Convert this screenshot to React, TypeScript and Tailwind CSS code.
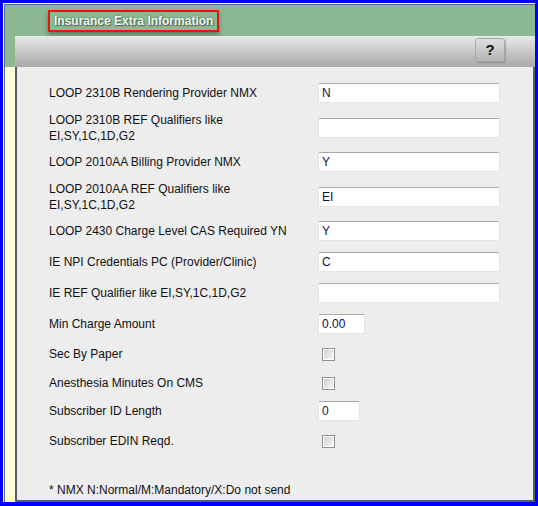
import React from 'react';

type Row =
  | { kind: 'text'; label: string[]; value: string; width: string; mt: string; h: string }
  | { kind: 'check'; label: string[]; mt: string; h: string };

const rows: Row[] = [
  { kind: 'text', label: ['LOOP 2310B Rendering Provider NMX'], value: 'N', width: 'w-[182px]', mt: 'mt-[16px]', h: 'h-[20px]' },
  { kind: 'text', label: ['LOOP 2310B REF Qualifiers like', 'EI,SY,1C,1D,G2'], value: '', width: 'w-[182px]', mt: 'mt-[9px]', h: 'h-[32px]' },
  { kind: 'text', label: ['LOOP 2010AA Billing Provider NMX'], value: 'Y', width: 'w-[182px]', mt: 'mt-[8px]', h: 'h-[20px]' },
  { kind: 'text', label: ['LOOP 2010AA REF Qualifiers like', 'EI,SY,1C,1D,G2'], value: 'EI', width: 'w-[182px]', mt: 'mt-[9px]', h: 'h-[32px]' },
  { kind: 'text', label: ['LOOP 2430 Charge Level CAS Required YN'], value: 'Y', width: 'w-[182px]', mt: 'mt-[8px]', h: 'h-[20px]' },
  { kind: 'text', label: ['IE NPI Credentials PC (Provider/Clinic)'], value: 'C', width: 'w-[182px]', mt: 'mt-[11px]', h: 'h-[20px]' },
  { kind: 'text', label: ['IE REF Qualifier like EI,SY,1C,1D,G2'], value: '', width: 'w-[182px]', mt: 'mt-[11px]', h: 'h-[20px]' },
  { kind: 'text', label: ['Min Charge Amount'], value: '0.00', width: 'w-[47px]', mt: 'mt-[11px]', h: 'h-[20px]' },
  { kind: 'check', label: ['Sec By Paper'], mt: 'mt-[10px]', h: 'h-[20px]' },
  { kind: 'check', label: ['Anesthesia Minutes On CMS'], mt: 'mt-[9px]', h: 'h-[20px]' },
  { kind: 'text', label: ['Subscriber ID Length'], value: '0', width: 'w-[42px]', mt: 'mt-[8px]', h: 'h-[20px]' },
  { kind: 'check', label: ['Subscriber EDIN Reqd.'], mt: 'mt-[10px]', h: 'h-[20px]' },
];

const TextBox = ({ value, width }: { value: string; width: string }) => (
  <div
    className={`${width} h-[20px] bg-white rounded-[2px] border border-[#e2e4e8] border-t-[#a9a9a9] flex items-center pl-[3px] text-[12px] text-[#10104a]`}
  >
    {value}
  </div>
);

const CheckBox = () => (
  <div className="ml-[4px] w-[13px] h-[13px] border border-[#8f8f8f] bg-white p-[1px]">
    <div className="w-full h-full bg-gradient-to-br from-[#cfd2d6] to-[#f4f5f6]" />
  </div>
);

export default function App() {
  return (
    <div
      className="w-[538px] h-[506px] bg-[#0000ff] pt-[3px] pl-[3px] pr-[3px] pb-[4px] text-[#111]"
      style={{ fontFamily: '"Liberation Sans", Arial, sans-serif' }}
    >
      <div className="w-full h-full border-t border-l border-white flex flex-col">
        <div className="flex-1 flex flex-col border-t border-l border-[#5d6b7a] bg-[#8cb993]">
          {/* Title */}
          <div className="h-[31px] shrink-0 pl-[43px] pt-[5px] flex items-start">
            <div className="h-[22px] border-2 border-[#ee1111] px-[4px] flex items-center shadow-[0_3px_5px_rgba(0,0,0,0.35)]">
              <span className="text-[12px] font-bold text-[#eef7f4] [text-shadow:0_0_2px_#3f5f46,1px_1px_1px_#4a6a50]">
                Insurance Extra Information
              </span>
            </div>
          </div>

          <div className="flex-1 grid grid-cols-[10px_1fr] grid-rows-[31px_1fr]">
            {/* Left strip */}
            <div className="bg-[#8cb993]" />

            {/* Toolbar */}
            <div className="bg-gradient-to-b from-[#e9e9e9] to-[#a9a9a9] flex justify-end items-start pt-[2px] pr-[30px]">
              <button className="w-[30px] h-[24px] rounded-[3px] border border-[#a8a8a8] bg-gradient-to-b from-[#e0e0e0] to-[#b4b4b4] flex items-center justify-center text-[15px] font-bold text-[#111] shadow-[1px_1px_1px_rgba(0,0,0,0.2)]">
                ?
              </button>
            </div>

            <div className="bg-[#ffffdc]" />

            {/* Content */}
            <div className="bg-[#ededed] border-l-[2px] border-r-[2px] border-b-[2px] border-[#56606c] pl-[32px] flex flex-col text-[12px]">
              {rows.map((r, i) => (
                <div key={i} className={`${r.mt} ${r.h} flex items-center`}>
                  <div className="w-[269px] leading-[16px]">
                    {r.label.map((l, j) => (
                      <div key={j}>{l}</div>
                    ))}
                  </div>
                  {r.kind === 'text' ? <TextBox value={r.value} width={r.width} /> : <CheckBox />}
                </div>
              ))}
              <div className="mt-[31px] h-[16px] leading-[16px]">* NMX N:Normal/M:Mandatory/X:Do not send</div>
            </div>
          </div>
        </div>
      </div>
    </div>
  );
}
